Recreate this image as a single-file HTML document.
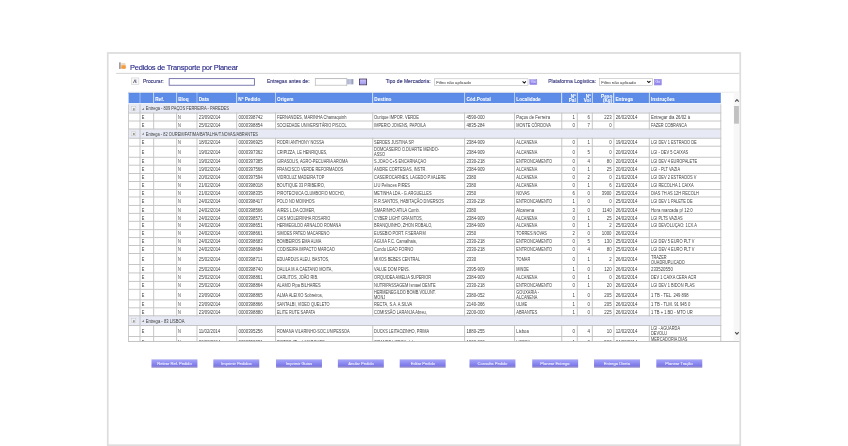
<!DOCTYPE html>
<html><head><meta charset="utf-8">
<style>
html,body{margin:0;padding:0;background:#fff;width:848px;height:446px;overflow:hidden;}
#stage{position:absolute;left:0;top:0;width:1920px;height:1010px;transform:scale(0.441667);transform-origin:0 0;filter:blur(0.6px);font-family:"Liberation Sans",sans-serif;}
.box{position:absolute;left:242px;top:117.7px;width:1435.7px;height:892.3px;box-sizing:border-box;border:4.5px solid #dedede;background:#fff;}
.abs{position:absolute;}
.title{position:absolute;left:294.5px;top:142.5px;-webkit-text-stroke:0.3px #2e2e8c;font-size:17px;line-height:20px;color:#2e2e8c;letter-spacing:-0.6px;white-space:nowrap;}
.ticon{position:absolute;left:268px;top:140px;width:18px;height:17px;}
.rule{position:absolute;left:262.6px;top:165px;width:1411px;height:2px;background:#cecece;}
.lbl{position:absolute;top:179.3px;font-size:11.3px;line-height:13px;color:#38387e;-webkit-text-stroke:0.3px #38387e;letter-spacing:0.1px;white-space:nowrap;}
.inp{position:absolute;box-sizing:border-box;background:#fff;}
.sel{position:absolute;box-sizing:border-box;background:#fff;border:1.5px solid #a0a0a0;font-size:9.8px;line-height:14.5px;color:#333;padding-left:4px;padding-top:1.5px;white-space:nowrap;letter-spacing:-0.1px;}
.chev{position:absolute;right:3px;top:4px;width:10px;height:7px;}
.go{position:absolute;box-sizing:border-box;background:linear-gradient(#a49cf6,#8a7eee);border:1.5px solid #7262cc;}
.go:after{content:'Go';position:absolute;left:2px;top:0;font-size:8px;line-height:10px;color:#e8e4ff;}
.scroll{position:absolute;left:290px;top:207.9px;width:1384px;height:565.1px;overflow:hidden;border-top:1.5px solid #d0d0d0;box-sizing:border-box;}
.sbot{position:absolute;left:290px;top:771.8px;width:1384px;height:1.8px;background:#bababa;}
table{position:absolute;left:-0.25px;top:1px;border-collapse:collapse;table-layout:fixed;width:1340.83px;font-size:10.6px;color:#414141;}
td,th{padding:0.5px 0 0 2.8px;overflow:hidden;white-space:nowrap;vertical-align:middle;line-height:11px;}
td{border:2px solid #bfbfbf;}
th{border-bottom:2px solid #e4eaf6;background:#5c8ce8;color:#fff;-webkit-text-stroke:0;font-weight:bold;text-align:left;border-left:2.5px solid #a8c2f4;border-top:1px solid #4a78d6;line-height:11.4px;padding-top:0;padding-bottom:0;}
th.r{padding-right:2.5px;}
.hs{position:relative;top:2px;display:inline-block;-webkit-text-stroke:0.1px #fff;}
th.r .hs{top:0.6px;}
th:first-child{border-left:1px solid #5a8ae6;}
.c{display:inline-block;transform-origin:0 50%;position:relative;top:0.8px;}
.r .c{transform-origin:100% 50%;}
.t{font-size:10.6px;}
.n{letter-spacing:0;}
.r{text-align:right;padding:0.5px 4px 0 0;}
tr.g td{background:#e7eaf4;}
td.gt{color:#3c3c3c;font-size:10.6px;}
.ico{display:inline-block;position:relative;width:9px;height:8px;border:1px solid #c4c4c4;background:#f2f2f2;vertical-align:middle;margin-left:2.5px;margin-top:-1px;}
.ico:after{content:'';position:absolute;left:2.5px;top:2.5px;width:4.5px;height:5px;background:#9a9a9a;}
.tri{display:inline-block;width:0;height:0;border-left:5px solid transparent;border-bottom:5px solid #888;margin-right:4px;vertical-align:1px;}
.sb{position:absolute;left:1660.7px;top:209px;width:13.5px;height:562px;background:#f7f7f7;}
.thumb{position:absolute;left:1662px;top:240px;width:10.5px;height:40px;background:#c1c1c1;}
.btn{position:absolute;top:814px;width:104px;height:17.5px;box-sizing:border-box;background:linear-gradient(#a2a2f8,#8a88f0 55%,#7672e2);border-top:1px solid #8a84e6;border-bottom:2px solid #5e52b0;color:#eeeeff;font-size:9.4px;-webkit-text-stroke:0.2px #eeeeff;text-align:center;line-height:15.5px;white-space:nowrap;letter-spacing:-0.1px;}
</style></head><body>
<div id="stage">
<div class="box"></div>
<svg class="ticon" viewBox="0 0 18 17"><rect x="1.5" y="1" width="4" height="15" rx="1" fill="#9c9ca2"/><rect x="5.5" y="2.5" width="11" height="6" rx="2" fill="#f0dcc4"/><ellipse cx="11.5" cy="11.6" rx="6.5" ry="5" fill="#f4b070"/><ellipse cx="12" cy="12" rx="3.5" ry="3" fill="#ef9c40"/></svg>
<div class="title">Pedidos de Transporte por Planear</div>
<div class="rule"></div>
<div class="inp" style="left:296.8px;top:175.5px;width:18px;height:16.5px;border:1.5px solid #c4c4c4;background:#f8f8f8;"><svg style="position:absolute;left:2.5px;top:2.5px" width="11" height="10" viewBox="0 0 11 10"><rect x="6" y="1" width="4" height="8" fill="#d4d0f0"/><path d="M2 9 L5.5 1.5 L8 9" stroke="#6a6a6a" stroke-width="2" fill="none"/></svg></div>
<div class="lbl" style="left:323.5px;">Procurar:</div>
<div class="inp" style="left:382.4px;top:176.8px;width:194.5px;height:17.2px;border:2px solid #6a6aa8;"></div>
<div class="lbl" style="left:604.3px;">Entregas antes de:</div>
<div class="inp" style="left:713.2px;top:177px;width:73px;height:17px;border:2px solid #c4c4c4;border-top-color:#b4b4b4;"></div>
<div class="inp" style="left:786.1px;top:178.9px;width:14px;height:12.5px;background:linear-gradient(90deg,#a8aed0,#c4c8de 50%,#8a90b0);"></div>
<div class="inp" style="left:813.3px;top:178px;width:17.7px;height:14.5px;border:2px solid #483868;background:linear-gradient(#c8c0fa,#a49cf0);"></div>
<div class="lbl" style="left:873.3px;">Tipo de Mercadoria:</div>
<div class="sel" style="left:983px;top:177.7px;width:212.7px;height:16.1px;">Filtro não aplicado<svg class="chev" viewBox="0 0 10 7"><path d="M1.2 1.2 L5 5 L8.8 1.2" stroke="#111" stroke-width="2.4" fill="none"/></svg></div>
<div class="go" style="left:1199.3px;top:180px;width:16.6px;height:12px;"></div>
<div class="lbl" style="left:1241.2px;">Plataforma Logística:</div>
<div class="sel" style="left:1356.5px;top:177px;width:121.8px;height:16.6px;">Filtro não aplicado<svg class="chev" viewBox="0 0 10 7"><path d="M1.2 1.2 L5 5 L8.8 1.2" stroke="#111" stroke-width="2.4" fill="none"/></svg></div>
<div class="go" style="left:1481.2px;top:179px;width:17.2px;height:13.7px;"></div>
<div class="scroll">
<table><colgroup><col style="width:26.72px"><col style="width:30.11px"><col style="width:52.08px"><col style="width:46.42px"><col style="width:89.66px"><col style="width:87.85px"><col style="width:220.08px"><col style="width:208.53px"><col style="width:112.98px"><col style="width:106.42px"><col style="width:35.55px"><col style="width:33.96px"><col style="width:48.68px"><col style="width:80.60px"><col style="width:161.21px"></colgroup>
<tr class="h" style="height:24.91px"><th><span class="hs"></span></th><th><span class="hs"></span></th><th><span class="hs">Ref.</span></th><th><span class="hs">Bloq</span></th><th><span class="hs">Data</span></th><th><span class="hs">Nº Pedido</span></th><th><span class="hs">Origem</span></th><th><span class="hs">Destino</span></th><th><span class="hs">Cód.Postal</span></th><th><span class="hs">Localidade</span></th><th class="r"><span class="hs">Nº<br>Pal</span></th><th class="r"><span class="hs">Nº<br>Vol</span></th><th class="r"><span class="hs">Peso<br>(Kg)</span></th><th><span class="hs">Entrega</span></th><th><span class="hs">Instruções</span></th></tr>
<tr class="g" style="height:21.06px"><td class="gi"><span class="ico"></span></td><td colspan="14" class="gt"><span class="tri"></span><span class="c" style="transform:scaleX(0.862)">Entrega - 809 PAÇOS FERREIRA - PAREDES</span></td></tr>
<tr style="height:17.89px"><td></td><td><span class="c" style="transform:scaleX(0.830)">E</span></td><td></td><td><span class="c" style="transform:scaleX(0.830)">N</span></td><td class="n"><span class="c" style="transform:scaleX(0.930)">23/09/2014</span></td><td class="n"><span class="c" style="transform:scaleX(0.930)">0000398742</span></td><td class="t"><span class="c" style="transform:scaleX(0.862)">FERNANDES, MARINHA Chamaquinh</span></td><td class="t"><span class="c" style="transform:scaleX(0.861)">Ourique IMPOR. VERDE</span></td><td class="n"><span class="c" style="transform:scaleX(0.930)">4590-000</span></td><td class="t"><span class="c" style="transform:scaleX(0.910)">Paços de Ferreira</span></td><td class="r"><span class="c" style="transform:scaleX(0.930)">1</span></td><td class="r"><span class="c" style="transform:scaleX(0.930)">6</span></td><td class="r"><span class="c" style="transform:scaleX(0.930)">223</span></td><td class="n"><span class="c" style="transform:scaleX(0.930)">26/02/2014</span></td><td class="t"><span class="c" style="transform:scaleX(0.920)">Entregar dia 26/02 à</span></td></tr>
<tr style="height:18.11px"><td></td><td><span class="c" style="transform:scaleX(0.830)">E</span></td><td></td><td><span class="c" style="transform:scaleX(0.830)">N</span></td><td class="n"><span class="c" style="transform:scaleX(0.930)">25/02/2014</span></td><td class="n"><span class="c" style="transform:scaleX(0.930)">0000398854</span></td><td class="t"><span class="c" style="transform:scaleX(0.833)">SOCIEDADE UNIVERSITÁRIO PISCOL</span></td><td class="t"><span class="c" style="transform:scaleX(0.836)">IMPERIO JOVENS, PAPOILA</span></td><td class="n"><span class="c" style="transform:scaleX(0.930)">4835-284</span></td><td class="t"><span class="c" style="transform:scaleX(0.833)">MONTE CÓRDOVA</span></td><td class="r"><span class="c" style="transform:scaleX(0.930)">0</span></td><td class="r"><span class="c" style="transform:scaleX(0.930)">7</span></td><td class="r"><span class="c" style="transform:scaleX(0.930)">0</span></td><td class="n"></td><td class="t"><span class="c" style="transform:scaleX(0.833)">FAZER COBRANCA</span></td></tr>
<tr class="g" style="height:20.38px"><td class="gi"><span class="ico"></span></td><td colspan="14" class="gt"><span class="tri"></span><span class="c" style="transform:scaleX(0.852)">Entrega - 82 OUREM/FATIMA/BATALHA/T.NOVAS/ABRANTES</span></td></tr>
<tr style="height:18.57px"><td></td><td><span class="c" style="transform:scaleX(0.830)">E</span></td><td></td><td><span class="c" style="transform:scaleX(0.830)">N</span></td><td class="n"><span class="c" style="transform:scaleX(0.930)">18/02/2014</span></td><td class="n"><span class="c" style="transform:scaleX(0.930)">0000396925</span></td><td class="t"><span class="c" style="transform:scaleX(0.835)">RODRI ANTHONY NOSSA</span></td><td class="t"><span class="c" style="transform:scaleX(0.838)">SERDES JUSTINA SP.</span></td><td class="n"><span class="c" style="transform:scaleX(0.930)">2384-909</span></td><td class="t"><span class="c" style="transform:scaleX(0.830)">ALCANENA</span></td><td class="r"><span class="c" style="transform:scaleX(0.930)">0</span></td><td class="r"><span class="c" style="transform:scaleX(0.930)">1</span></td><td class="r"><span class="c" style="transform:scaleX(0.930)">0</span></td><td class="n"><span class="c" style="transform:scaleX(0.930)">19/02/2014</span></td><td class="t"><span class="c" style="transform:scaleX(0.844)">LGI DEV 1 ESTRADO DE</span></td></tr>
<tr style="height:24.91px"><td></td><td><span class="c" style="transform:scaleX(0.830)">E</span></td><td></td><td><span class="c" style="transform:scaleX(0.830)">N</span></td><td class="n"><span class="c" style="transform:scaleX(0.930)">19/02/2014</span></td><td class="n"><span class="c" style="transform:scaleX(0.930)">0000397362</span></td><td class="t"><span class="c" style="transform:scaleX(0.839)">CRIPIZZA, LE HENRIQUES,</span></td><td class="t"><span class="c" style="transform:scaleX(0.836)">DOMCASEIRO O.DUARTE MENDO-<br>ASSO</span></td><td class="n"><span class="c" style="transform:scaleX(0.930)">2384-909</span></td><td class="t"><span class="c" style="transform:scaleX(0.830)">ALCANENA</span></td><td class="r"><span class="c" style="transform:scaleX(0.930)">0</span></td><td class="r"><span class="c" style="transform:scaleX(0.930)">5</span></td><td class="r"><span class="c" style="transform:scaleX(0.930)">0</span></td><td class="n"><span class="c" style="transform:scaleX(0.930)">20/02/2014</span></td><td class="t"><span class="c" style="transform:scaleX(0.851)">LGI - DEV 5 CAIXAS</span></td></tr>
<tr style="height:18.11px"><td></td><td><span class="c" style="transform:scaleX(0.830)">E</span></td><td></td><td><span class="c" style="transform:scaleX(0.830)">N</span></td><td class="n"><span class="c" style="transform:scaleX(0.930)">19/02/2014</span></td><td class="n"><span class="c" style="transform:scaleX(0.930)">0000397385</span></td><td class="t"><span class="c" style="transform:scaleX(0.836)">GIRASOLIS, AGRO-PECUARIA AROMA</span></td><td class="t"><span class="c" style="transform:scaleX(0.841)">S.JOÃO C+S ENCARNAÇÃO</span></td><td class="n"><span class="c" style="transform:scaleX(0.930)">2330-218</span></td><td class="t"><span class="c" style="transform:scaleX(0.830)">ENTRONCAMENTO</span></td><td class="r"><span class="c" style="transform:scaleX(0.930)">0</span></td><td class="r"><span class="c" style="transform:scaleX(0.930)">4</span></td><td class="r"><span class="c" style="transform:scaleX(0.930)">80</span></td><td class="n"><span class="c" style="transform:scaleX(0.930)">20/02/2014</span></td><td class="t"><span class="c" style="transform:scaleX(0.842)">LGI DEV 4 EUROPALETE</span></td></tr>
<tr style="height:18.34px"><td></td><td><span class="c" style="transform:scaleX(0.830)">E</span></td><td></td><td><span class="c" style="transform:scaleX(0.830)">N</span></td><td class="n"><span class="c" style="transform:scaleX(0.930)">19/02/2014</span></td><td class="n"><span class="c" style="transform:scaleX(0.930)">0000397568</span></td><td class="t"><span class="c" style="transform:scaleX(0.833)">FRANCISCO VERDE REFORMADOS</span></td><td class="t"><span class="c" style="transform:scaleX(0.838)">ANDRE CORTESIAS, INSTR.</span></td><td class="n"><span class="c" style="transform:scaleX(0.930)">2384-909</span></td><td class="t"><span class="c" style="transform:scaleX(0.830)">ALCANENA</span></td><td class="r"><span class="c" style="transform:scaleX(0.930)">0</span></td><td class="r"><span class="c" style="transform:scaleX(0.930)">1</span></td><td class="r"><span class="c" style="transform:scaleX(0.930)">25</span></td><td class="n"><span class="c" style="transform:scaleX(0.930)">20/02/2014</span></td><td class="t"><span class="c" style="transform:scaleX(0.846)">LGI - PLT VAZIA</span></td></tr>
<tr style="height:18.11px"><td></td><td><span class="c" style="transform:scaleX(0.830)">E</span></td><td></td><td><span class="c" style="transform:scaleX(0.830)">N</span></td><td class="n"><span class="c" style="transform:scaleX(0.930)">20/02/2014</span></td><td class="n"><span class="c" style="transform:scaleX(0.930)">0000397594</span></td><td class="t"><span class="c" style="transform:scaleX(0.835)">VIDROLUZ MADEIRA TOP</span></td><td class="t"><span class="c" style="transform:scaleX(0.836)">CASEIROCARNES, LAGEDO P.VALERE</span></td><td class="n"><span class="c" style="transform:scaleX(0.930)">2380</span></td><td class="t"><span class="c" style="transform:scaleX(0.830)">ALCANENA</span></td><td class="r"><span class="c" style="transform:scaleX(0.930)">0</span></td><td class="r"><span class="c" style="transform:scaleX(0.930)">2</span></td><td class="r"><span class="c" style="transform:scaleX(0.930)">0</span></td><td class="n"><span class="c" style="transform:scaleX(0.930)">21/02/2014</span></td><td class="t"><span class="c" style="transform:scaleX(0.844)">LGI DEV 2 ESTRADOS V</span></td></tr>
<tr style="height:17.89px"><td></td><td><span class="c" style="transform:scaleX(0.830)">E</span></td><td></td><td><span class="c" style="transform:scaleX(0.830)">N</span></td><td class="n"><span class="c" style="transform:scaleX(0.930)">21/02/2014</span></td><td class="n"><span class="c" style="transform:scaleX(0.930)">0000398018</span></td><td class="t"><span class="c" style="transform:scaleX(0.848)">BOUTIQUE 33 P.RIBEIRO,</span></td><td class="t"><span class="c" style="transform:scaleX(0.869)">LIU Pelisces PIRES</span></td><td class="n"><span class="c" style="transform:scaleX(0.930)">2380</span></td><td class="t"><span class="c" style="transform:scaleX(0.830)">ALCANENA</span></td><td class="r"><span class="c" style="transform:scaleX(0.930)">0</span></td><td class="r"><span class="c" style="transform:scaleX(0.930)">1</span></td><td class="r"><span class="c" style="transform:scaleX(0.930)">6</span></td><td class="n"><span class="c" style="transform:scaleX(0.930)">21/02/2014</span></td><td class="t"><span class="c" style="transform:scaleX(0.843)">LGI RECOLHA 1 CAIXA</span></td></tr>
<tr style="height:17.89px"><td></td><td><span class="c" style="transform:scaleX(0.830)">E</span></td><td></td><td><span class="c" style="transform:scaleX(0.830)">N</span></td><td class="n"><span class="c" style="transform:scaleX(0.930)">21/02/2014</span></td><td class="n"><span class="c" style="transform:scaleX(0.930)">0000398335</span></td><td class="t"><span class="c" style="transform:scaleX(0.835)">PIROTECNICA CLUMBOFIO MOCHO,</span></td><td class="t"><span class="c" style="transform:scaleX(0.840)">METINHA LDA.- G.ARGUELLES</span></td><td class="n"><span class="c" style="transform:scaleX(0.930)">2350</span></td><td class="t"><span class="c" style="transform:scaleX(0.830)">NOVAS</span></td><td class="r"><span class="c" style="transform:scaleX(0.930)">6</span></td><td class="r"><span class="c" style="transform:scaleX(0.930)">0</span></td><td class="r"><span class="c" style="transform:scaleX(0.930)">3900</span></td><td class="n"><span class="c" style="transform:scaleX(0.930)">25/02/2014</span></td><td class="t"><span class="c" style="transform:scaleX(0.853)">DIAS 7H AS 12H RECOLH</span></td></tr>
<tr style="height:18.34px"><td></td><td><span class="c" style="transform:scaleX(0.830)">E</span></td><td></td><td><span class="c" style="transform:scaleX(0.830)">N</span></td><td class="n"><span class="c" style="transform:scaleX(0.930)">24/02/2014</span></td><td class="n"><span class="c" style="transform:scaleX(0.930)">0000398417</span></td><td class="t"><span class="c" style="transform:scaleX(0.836)">POLO NO MOINHOS</span></td><td class="t"><span class="c" style="transform:scaleX(0.838)">R.R.SANTOS, HABITAÇÃO DIVERSOS</span></td><td class="n"><span class="c" style="transform:scaleX(0.930)">2330-218</span></td><td class="t"><span class="c" style="transform:scaleX(0.830)">ENTRONCAMENTO</span></td><td class="r"><span class="c" style="transform:scaleX(0.930)">1</span></td><td class="r"><span class="c" style="transform:scaleX(0.930)">0</span></td><td class="r"><span class="c" style="transform:scaleX(0.930)">0</span></td><td class="n"><span class="c" style="transform:scaleX(0.930)">25/02/2014</span></td><td class="t"><span class="c" style="transform:scaleX(0.846)">LGI DEV 1 PALETE DE</span></td></tr>
<tr style="height:18.34px"><td></td><td><span class="c" style="transform:scaleX(0.830)">E</span></td><td></td><td><span class="c" style="transform:scaleX(0.830)">N</span></td><td class="n"><span class="c" style="transform:scaleX(0.930)">24/02/2014</span></td><td class="n"><span class="c" style="transform:scaleX(0.930)">0000398566</span></td><td class="t"><span class="c" style="transform:scaleX(0.841)">AIRES L.DA COMER,</span></td><td class="t"><span class="c" style="transform:scaleX(0.853)">SMARINHO ATILA Comb.</span></td><td class="n"><span class="c" style="transform:scaleX(0.930)">2380</span></td><td class="t"><span class="c" style="transform:scaleX(0.910)">Alcanena</span></td><td class="r"><span class="c" style="transform:scaleX(0.930)">3</span></td><td class="r"><span class="c" style="transform:scaleX(0.930)">0</span></td><td class="r"><span class="c" style="transform:scaleX(0.930)">1140</span></td><td class="n"><span class="c" style="transform:scaleX(0.930)">26/02/2014</span></td><td class="t"><span class="c" style="transform:scaleX(0.919)">Hora marcada p/ 12:0</span></td></tr>
<tr style="height:18.34px"><td></td><td><span class="c" style="transform:scaleX(0.830)">E</span></td><td></td><td><span class="c" style="transform:scaleX(0.830)">N</span></td><td class="n"><span class="c" style="transform:scaleX(0.930)">24/02/2014</span></td><td class="n"><span class="c" style="transform:scaleX(0.930)">0000398571</span></td><td class="t"><span class="c" style="transform:scaleX(0.834)">CAIS MOLEIRINHA ROSARIO</span></td><td class="t"><span class="c" style="transform:scaleX(0.837)">CYBER LIGHT GRANITOS,</span></td><td class="n"><span class="c" style="transform:scaleX(0.930)">2384-909</span></td><td class="t"><span class="c" style="transform:scaleX(0.830)">ALCANENA</span></td><td class="r"><span class="c" style="transform:scaleX(0.930)">0</span></td><td class="r"><span class="c" style="transform:scaleX(0.930)">1</span></td><td class="r"><span class="c" style="transform:scaleX(0.930)">25</span></td><td class="n"><span class="c" style="transform:scaleX(0.930)">24/02/2014</span></td><td class="t"><span class="c" style="transform:scaleX(0.837)">LGI PLTS VAZIAS</span></td></tr>
<tr style="height:18.34px"><td></td><td><span class="c" style="transform:scaleX(0.830)">E</span></td><td></td><td><span class="c" style="transform:scaleX(0.830)">N</span></td><td class="n"><span class="c" style="transform:scaleX(0.930)">24/02/2014</span></td><td class="n"><span class="c" style="transform:scaleX(0.930)">0000398651</span></td><td class="t"><span class="c" style="transform:scaleX(0.833)">HERMEGILDO ARNALDO ROMANA</span></td><td class="t"><span class="c" style="transform:scaleX(0.837)">BRANQUINHO, ZHON ROBALO,</span></td><td class="n"><span class="c" style="transform:scaleX(0.930)">2384-909</span></td><td class="t"><span class="c" style="transform:scaleX(0.830)">ALCANENA</span></td><td class="r"><span class="c" style="transform:scaleX(0.930)">0</span></td><td class="r"><span class="c" style="transform:scaleX(0.930)">1</span></td><td class="r"><span class="c" style="transform:scaleX(0.930)">2</span></td><td class="n"><span class="c" style="transform:scaleX(0.930)">25/02/2014</span></td><td class="t"><span class="c" style="transform:scaleX(0.844)">LGI DEVOLUÇAO: 1CX.A</span></td></tr>
<tr style="height:17.89px"><td></td><td><span class="c" style="transform:scaleX(0.830)">E</span></td><td></td><td><span class="c" style="transform:scaleX(0.830)">N</span></td><td class="n"><span class="c" style="transform:scaleX(0.930)">24/02/2014</span></td><td class="n"><span class="c" style="transform:scaleX(0.930)">0000398661</span></td><td class="t"><span class="c" style="transform:scaleX(0.834)">SIMOES PATEO MACARENO</span></td><td class="t"><span class="c" style="transform:scaleX(0.838)">EUSEBIO PORT. F.SERAFIM</span></td><td class="n"><span class="c" style="transform:scaleX(0.930)">2350</span></td><td class="t"><span class="c" style="transform:scaleX(0.833)">TORRES NOVAS</span></td><td class="r"><span class="c" style="transform:scaleX(0.930)">2</span></td><td class="r"><span class="c" style="transform:scaleX(0.930)">0</span></td><td class="r"><span class="c" style="transform:scaleX(0.930)">1000</span></td><td class="n"><span class="c" style="transform:scaleX(0.930)">26/02/2014</span></td><td class="t"></td></tr>
<tr style="height:17.89px"><td></td><td><span class="c" style="transform:scaleX(0.830)">E</span></td><td></td><td><span class="c" style="transform:scaleX(0.830)">N</span></td><td class="n"><span class="c" style="transform:scaleX(0.930)">24/02/2014</span></td><td class="n"><span class="c" style="transform:scaleX(0.930)">0000398683</span></td><td class="t"><span class="c" style="transform:scaleX(0.835)">BOMBEIROS EMA ALMA</span></td><td class="t"><span class="c" style="transform:scaleX(0.879)">AGUIA F.C. Carvalhais,</span></td><td class="n"><span class="c" style="transform:scaleX(0.930)">2330-218</span></td><td class="t"><span class="c" style="transform:scaleX(0.830)">ENTRONCAMENTO</span></td><td class="r"><span class="c" style="transform:scaleX(0.930)">0</span></td><td class="r"><span class="c" style="transform:scaleX(0.930)">5</span></td><td class="r"><span class="c" style="transform:scaleX(0.930)">130</span></td><td class="n"><span class="c" style="transform:scaleX(0.930)">25/02/2014</span></td><td class="t"><span class="c" style="transform:scaleX(0.848)">LGI DEV 5 EURO PLT V</span></td></tr>
<tr style="height:18.79px"><td></td><td><span class="c" style="transform:scaleX(0.830)">E</span></td><td></td><td><span class="c" style="transform:scaleX(0.830)">N</span></td><td class="n"><span class="c" style="transform:scaleX(0.930)">24/02/2014</span></td><td class="n"><span class="c" style="transform:scaleX(0.930)">0000398684</span></td><td class="t"><span class="c" style="transform:scaleX(0.834)">CODISEIRA IMPACTO MARCAO</span></td><td class="t"><span class="c" style="transform:scaleX(0.857)">Condu LEAO FORNO</span></td><td class="n"><span class="c" style="transform:scaleX(0.930)">2330-218</span></td><td class="t"><span class="c" style="transform:scaleX(0.830)">ENTRONCAMENTO</span></td><td class="r"><span class="c" style="transform:scaleX(0.930)">0</span></td><td class="r"><span class="c" style="transform:scaleX(0.930)">4</span></td><td class="r"><span class="c" style="transform:scaleX(0.930)">80</span></td><td class="n"><span class="c" style="transform:scaleX(0.930)">25/02/2014</span></td><td class="t"><span class="c" style="transform:scaleX(0.848)">LGI DEV 4 EURO PLT V</span></td></tr>
<tr style="height:25.13px"><td></td><td><span class="c" style="transform:scaleX(0.830)">E</span></td><td></td><td><span class="c" style="transform:scaleX(0.830)">N</span></td><td class="n"><span class="c" style="transform:scaleX(0.930)">25/02/2014</span></td><td class="n"><span class="c" style="transform:scaleX(0.930)">0000398711</span></td><td class="t"><span class="c" style="transform:scaleX(0.838)">EDUARDUS ALEU, BASTOS,</span></td><td class="t"><span class="c" style="transform:scaleX(0.835)">MIXOS BEBES CENTRAL</span></td><td class="n"><span class="c" style="transform:scaleX(0.930)">2330</span></td><td class="t"><span class="c" style="transform:scaleX(0.830)">TOMAR</span></td><td class="r"><span class="c" style="transform:scaleX(0.930)">0</span></td><td class="r"><span class="c" style="transform:scaleX(0.930)">1</span></td><td class="r"><span class="c" style="transform:scaleX(0.930)">2</span></td><td class="n"><span class="c" style="transform:scaleX(0.930)">26/02/2014</span></td><td class="t"><span class="c" style="transform:scaleX(0.830)">TRAZER<br>QUADRUPLICADO</span></td></tr>
<tr style="height:18.79px"><td></td><td><span class="c" style="transform:scaleX(0.830)">E</span></td><td></td><td><span class="c" style="transform:scaleX(0.830)">N</span></td><td class="n"><span class="c" style="transform:scaleX(0.930)">25/02/2014</span></td><td class="n"><span class="c" style="transform:scaleX(0.930)">0000398740</span></td><td class="t"><span class="c" style="transform:scaleX(0.840)">DALILA M.A.CAETANO MOITA,</span></td><td class="t"><span class="c" style="transform:scaleX(0.839)">VALUE DOM PENS.</span></td><td class="n"><span class="c" style="transform:scaleX(0.930)">2395-909</span></td><td class="t"><span class="c" style="transform:scaleX(0.830)">MINDE</span></td><td class="r"><span class="c" style="transform:scaleX(0.930)">1</span></td><td class="r"><span class="c" style="transform:scaleX(0.930)">0</span></td><td class="r"><span class="c" style="transform:scaleX(0.930)">120</span></td><td class="n"><span class="c" style="transform:scaleX(0.930)">26/02/2014</span></td><td class="t"><span class="c" style="transform:scaleX(0.930)">233520550</span></td></tr>
<tr style="height:18.34px"><td></td><td><span class="c" style="transform:scaleX(0.830)">E</span></td><td></td><td><span class="c" style="transform:scaleX(0.830)">N</span></td><td class="n"><span class="c" style="transform:scaleX(0.930)">25/02/2014</span></td><td class="n"><span class="c" style="transform:scaleX(0.930)">0000398861</span></td><td class="t"><span class="c" style="transform:scaleX(0.841)">CARLITOS, JOÃO RIB.</span></td><td class="t"><span class="c" style="transform:scaleX(0.834)">ORQUIDEA AMELIA SUPERIOR</span></td><td class="n"><span class="c" style="transform:scaleX(0.930)">2384-909</span></td><td class="t"><span class="c" style="transform:scaleX(0.830)">ALCANENA</span></td><td class="r"><span class="c" style="transform:scaleX(0.930)">0</span></td><td class="r"><span class="c" style="transform:scaleX(0.930)">1</span></td><td class="r"><span class="c" style="transform:scaleX(0.930)">0</span></td><td class="n"><span class="c" style="transform:scaleX(0.930)">26/02/2014</span></td><td class="t"><span class="c" style="transform:scaleX(0.844)">DEV 1 CAIXA CERA ACR</span></td></tr>
<tr style="height:18.34px"><td></td><td><span class="c" style="transform:scaleX(0.830)">E</span></td><td></td><td><span class="c" style="transform:scaleX(0.830)">N</span></td><td class="n"><span class="c" style="transform:scaleX(0.930)">25/02/2014</span></td><td class="n"><span class="c" style="transform:scaleX(0.930)">0000398864</span></td><td class="t"><span class="c" style="transform:scaleX(0.847)">ALAMO Pipa BILHARES</span></td><td class="t"><span class="c" style="transform:scaleX(0.850)">NUTRIPASSAGEM Ismael DENTE</span></td><td class="n"><span class="c" style="transform:scaleX(0.930)">2330-218</span></td><td class="t"><span class="c" style="transform:scaleX(0.830)">ENTRONCAMENTO</span></td><td class="r"><span class="c" style="transform:scaleX(0.930)">0</span></td><td class="r"><span class="c" style="transform:scaleX(0.930)">1</span></td><td class="r"><span class="c" style="transform:scaleX(0.930)">20</span></td><td class="n"><span class="c" style="transform:scaleX(0.930)">26/02/2014</span></td><td class="t"><span class="c" style="transform:scaleX(0.845)">LGI DEV 1 BIDON PLAS</span></td></tr>
<tr style="height:24.23px"><td></td><td><span class="c" style="transform:scaleX(0.830)">E</span></td><td></td><td><span class="c" style="transform:scaleX(0.830)">N</span></td><td class="n"><span class="c" style="transform:scaleX(0.930)">23/09/2014</span></td><td class="n"><span class="c" style="transform:scaleX(0.930)">0000398865</span></td><td class="t"><span class="c" style="transform:scaleX(0.867)">ALMA ALEIXO Sobreiros,</span></td><td class="t"><span class="c" style="transform:scaleX(0.834)">HERMENEGILDO BOMB.VOLUNT.<br>MONJ</span></td><td class="n"><span class="c" style="transform:scaleX(0.930)">2380-052</span></td><td class="t"><span class="c" style="transform:scaleX(0.835)">GOUXARIA -<br>ALCANENA</span></td><td class="r"><span class="c" style="transform:scaleX(0.930)">1</span></td><td class="r"><span class="c" style="transform:scaleX(0.930)">0</span></td><td class="r"><span class="c" style="transform:scaleX(0.930)">205</span></td><td class="n"><span class="c" style="transform:scaleX(0.930)">26/02/2014</span></td><td class="t"><span class="c" style="transform:scaleX(0.895)">1 TB - TEL. 249 898</span></td></tr>
<tr style="height:17.43px"><td></td><td><span class="c" style="transform:scaleX(0.830)">E</span></td><td></td><td><span class="c" style="transform:scaleX(0.830)">N</span></td><td class="n"><span class="c" style="transform:scaleX(0.930)">23/09/2014</span></td><td class="n"><span class="c" style="transform:scaleX(0.930)">0000398866</span></td><td class="t"><span class="c" style="transform:scaleX(0.836)">SANTALBI, VIDEO QUELETO</span></td><td class="t"><span class="c" style="transform:scaleX(0.847)">RECTA, S.A. A.SILVA</span></td><td class="n"><span class="c" style="transform:scaleX(0.930)">2140-366</span></td><td class="t"><span class="c" style="transform:scaleX(0.830)">ULME</span></td><td class="r"><span class="c" style="transform:scaleX(0.930)">1</span></td><td class="r"><span class="c" style="transform:scaleX(0.930)">0</span></td><td class="r"><span class="c" style="transform:scaleX(0.930)">205</span></td><td class="n"><span class="c" style="transform:scaleX(0.930)">26/02/2014</span></td><td class="t"><span class="c" style="transform:scaleX(0.895)">1 TB - TLM. 91 945 0</span></td></tr>
<tr style="height:18.11px"><td></td><td><span class="c" style="transform:scaleX(0.830)">E</span></td><td></td><td><span class="c" style="transform:scaleX(0.830)">N</span></td><td class="n"><span class="c" style="transform:scaleX(0.930)">23/09/2014</span></td><td class="n"><span class="c" style="transform:scaleX(0.930)">0000398880</span></td><td class="t"><span class="c" style="transform:scaleX(0.836)">ELITE RUTE SAPATA</span></td><td class="t"><span class="c" style="transform:scaleX(0.850)">COMISSÃO LARANJA Abreu,</span></td><td class="n"><span class="c" style="transform:scaleX(0.930)">2200-000</span></td><td class="t"><span class="c" style="transform:scaleX(0.830)">ABRANTES</span></td><td class="r"><span class="c" style="transform:scaleX(0.930)">1</span></td><td class="r"><span class="c" style="transform:scaleX(0.930)">0</span></td><td class="r"><span class="c" style="transform:scaleX(0.930)">225</span></td><td class="n"><span class="c" style="transform:scaleX(0.930)">26/02/2014</span></td><td class="t"><span class="c" style="transform:scaleX(0.869)">1 TB + 1 BD - MTO UR</span></td></tr>
<tr class="g" style="height:22.19px"><td class="gi"><span class="ico"></span></td><td colspan="14" class="gt"><span class="tri"></span><span class="c" style="transform:scaleX(0.883)">Entrega - 83 LISBOA</span></td></tr>
<tr style="height:24.45px"><td></td><td><span class="c" style="transform:scaleX(0.830)">E</span></td><td></td><td><span class="c" style="transform:scaleX(0.830)">N</span></td><td class="n"><span class="c" style="transform:scaleX(0.930)">11/02/2014</span></td><td class="n"><span class="c" style="transform:scaleX(0.930)">0000395256</span></td><td class="t"><span class="c" style="transform:scaleX(0.835)">ROMANA VILARINHO-SOC.UNIPESSOA</span></td><td class="t"><span class="c" style="transform:scaleX(0.836)">DUCKS LEITAOZINHO, PRIMA</span></td><td class="n"><span class="c" style="transform:scaleX(0.930)">1880-255</span></td><td class="t"><span class="c" style="transform:scaleX(0.907)">Lisboa</span></td><td class="r"><span class="c" style="transform:scaleX(0.930)">0</span></td><td class="r"><span class="c" style="transform:scaleX(0.930)">4</span></td><td class="r"><span class="c" style="transform:scaleX(0.930)">10</span></td><td class="n"><span class="c" style="transform:scaleX(0.930)">12/02/2014</span></td><td class="t"><span class="c" style="transform:scaleX(0.838)">LGI - AGUARDA<br>DEVOLU</span></td></tr>
<tr style="height:25.36px"><td></td><td><span class="c" style="transform:scaleX(0.830)">E</span></td><td></td><td><span class="c" style="transform:scaleX(0.830)">N</span></td><td class="n"><span class="c" style="transform:scaleX(0.930)">20/02/2014</span></td><td class="n"><span class="c" style="transform:scaleX(0.930)">0000398031</span></td><td class="t"><span class="c" style="transform:scaleX(0.852)">EXITOS (Ther) MARQUES</span></td><td class="t"><span class="c" style="transform:scaleX(0.848)">GRANDE LISBOA, Lda</span></td><td class="n"><span class="c" style="transform:scaleX(0.930)">1800-000</span></td><td class="t"><span class="c" style="transform:scaleX(0.830)">LISBOA</span></td><td class="r"><span class="c" style="transform:scaleX(0.930)">1</span></td><td class="r"><span class="c" style="transform:scaleX(0.930)">0</span></td><td class="r"><span class="c" style="transform:scaleX(0.930)">500</span></td><td class="n"><span class="c" style="transform:scaleX(0.930)">24/02/2014</span></td><td class="t"><span class="c" style="transform:scaleX(0.832)">MERCADORIA DIAS<br>UTEIS</span></td></tr>

</table>
</div>
<div class="sb"></div>
<div class="thumb"></div>
<svg class="abs" style="left:1663px;top:223px;width:11px;height:9px" viewBox="0 0 11 9"><path d="M1.5 7 L5.5 2.5 L9.5 7" stroke="#505050" stroke-width="2.6" fill="none"/></svg>
<svg class="abs" style="left:1663px;top:750px;width:11px;height:9px" viewBox="0 0 11 9"><path d="M1.5 2 L5.5 6.5 L9.5 2" stroke="#505050" stroke-width="2.6" fill="none"/></svg>
<div class="sbot"></div>
<div class="btn" style="left:343.0px">Retirar Ref. Pedido</div><div class="btn" style="left:483.2px">Imprimir Pedidos</div><div class="btn" style="left:624.7px">Imprimir Guias</div><div class="btn" style="left:765.3px">Anular Pedido</div><div class="btn" style="left:905.4px">Editar Pedido</div><div class="btn" style="left:1063.0px">Consulta Pedido</div><div class="btn" style="left:1204.5px">Planear Entrega</div><div class="btn" style="left:1344.7px">Entrega Direta</div><div class="btn" style="left:1485.5px">Planear Tração</div>
</div>
</body></html>
